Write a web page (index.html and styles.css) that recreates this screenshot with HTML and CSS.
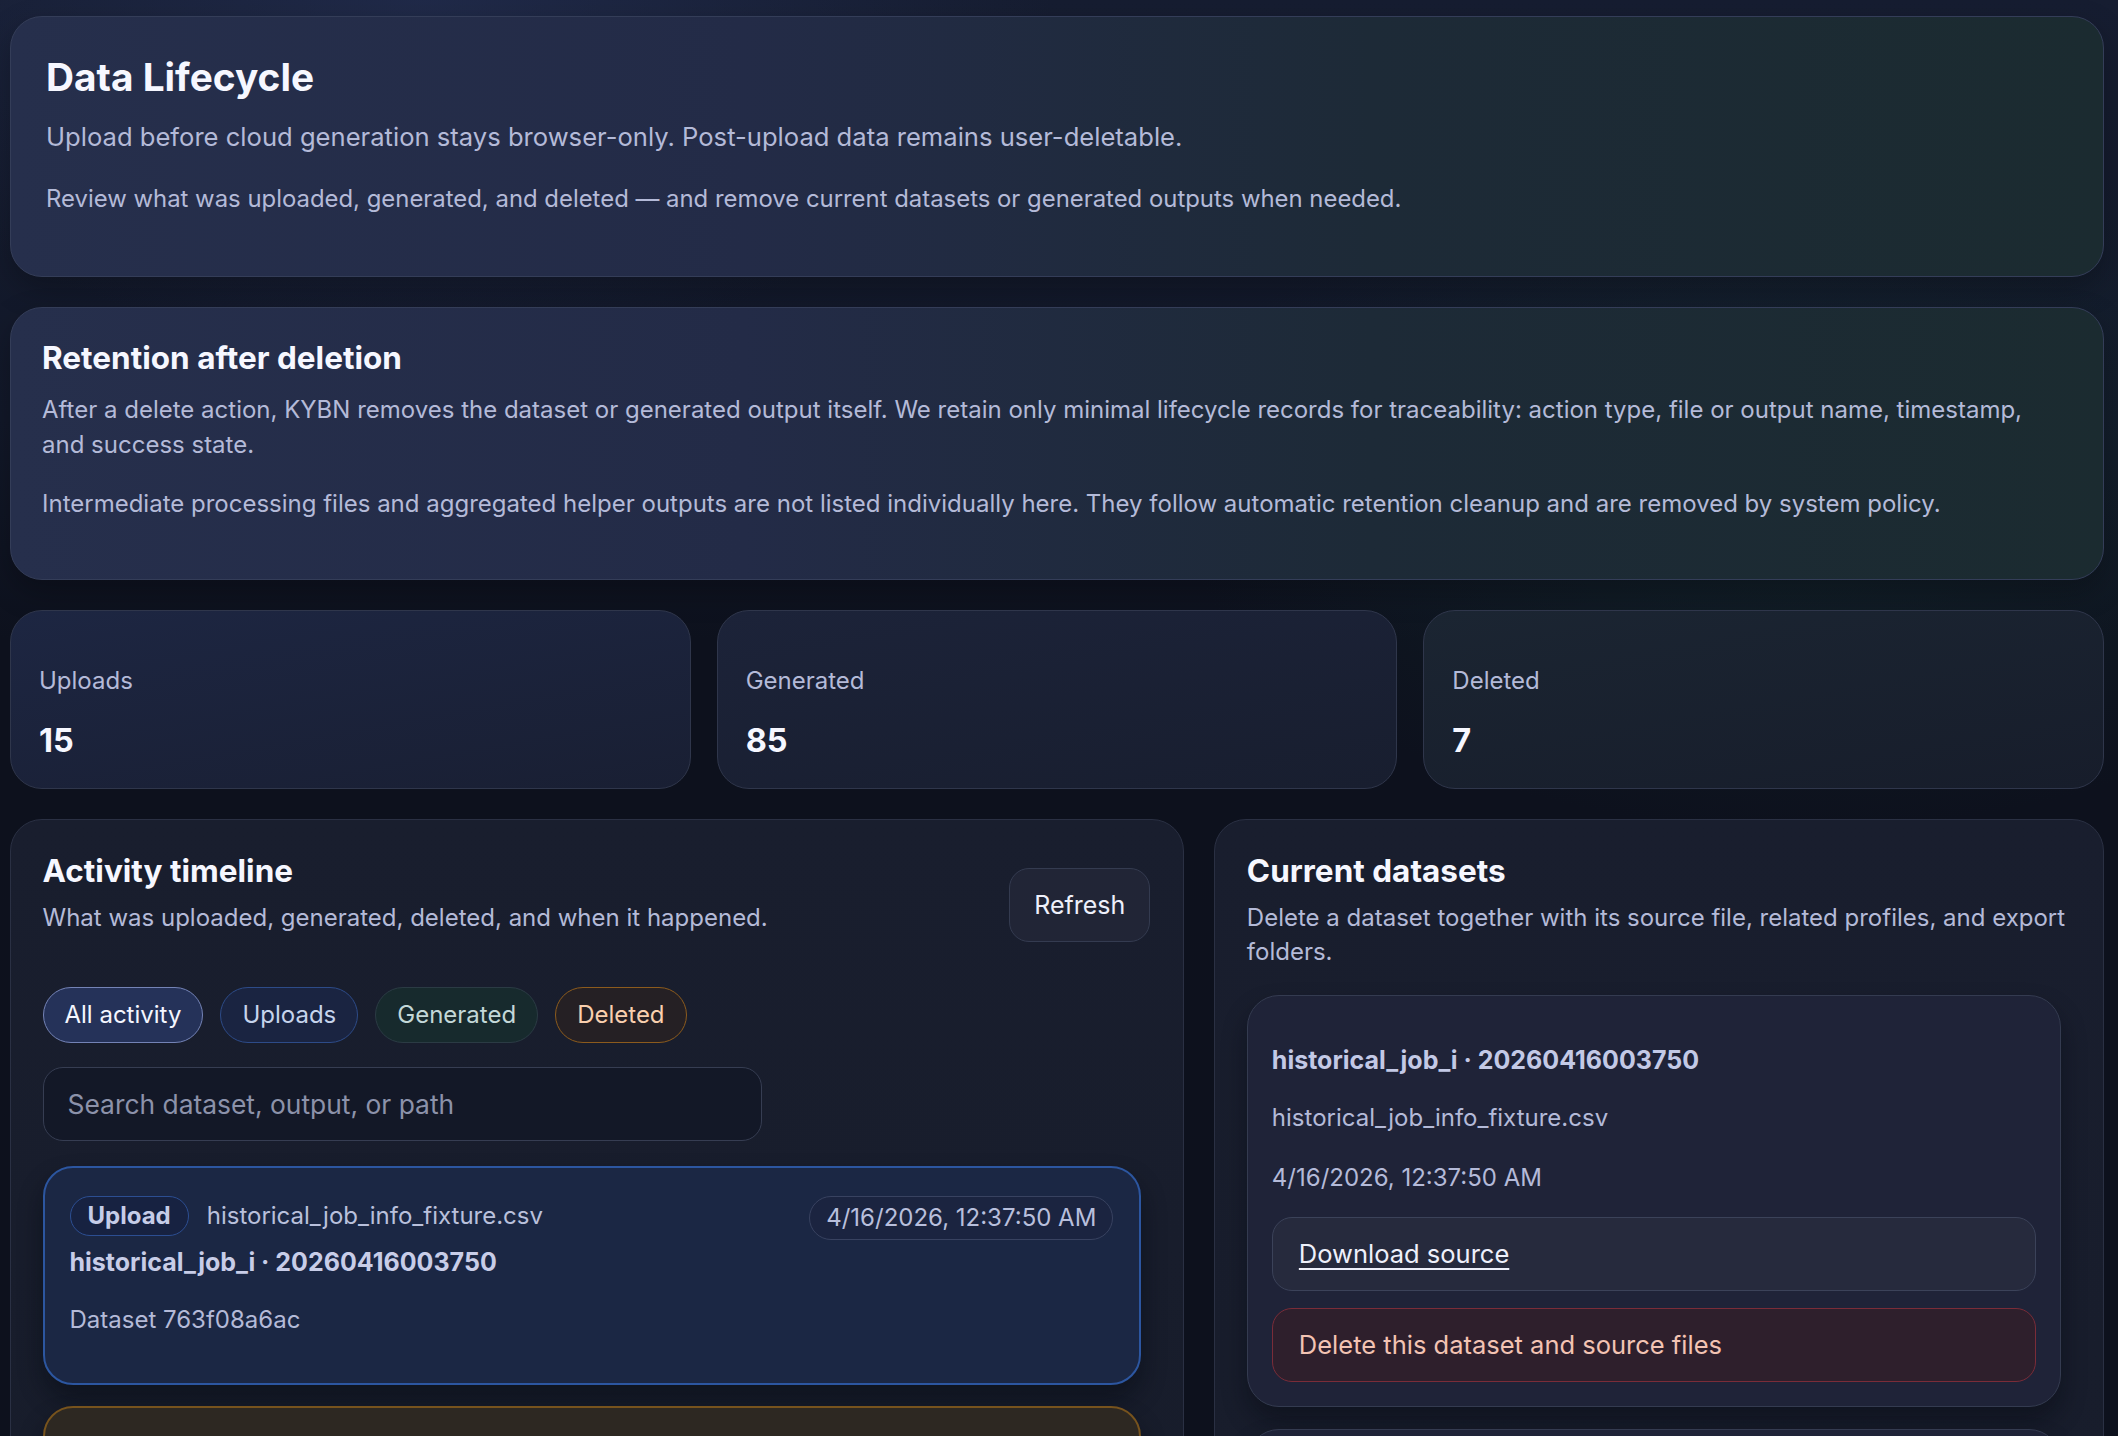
FILE: index.html
```html
<!DOCTYPE html>
<html lang="en">
<head>
    <meta charset="UTF-8">
    <meta name="viewport" content="width=device-width, initial-scale=1.0">
    <title>Data Lifecycle - KYBN</title>
    <link rel="stylesheet" href="styles.css">
</head>
<body>

    <main class="page">
        <section class="card hero">
            <h1>Data Lifecycle</h1>
            <p class="lead">Upload before cloud generation stays browser-only. Post-upload data remains user-deletable.</p>
            <p class="lead lead-small">Review what was uploaded, generated, and deleted — and remove current datasets or generated outputs when needed.</p>
        </section>

        <section class="card retention">
            <h2>Retention after deletion</h2>
            <p class="copy">After a delete action, KYBN removes the dataset or generated output itself. We retain only minimal lifecycle records for traceability: action type, file or output name, timestamp, and success state.</p>
            <p class="copy copy-gap">Intermediate processing files and aggregated helper outputs are not listed individually here. They follow automatic retention cleanup and are removed by system policy.</p>
        </section>

        <section class="stats">
            <div class="stat stat-blue">
                <div class="stat-label">Uploads</div>
                <div class="stat-value">15</div>
            </div>
            <div class="stat stat-mid">
                <div class="stat-label">Generated</div>
                <div class="stat-value">85</div>
            </div>
            <div class="stat stat-teal">
                <div class="stat-label">Deleted</div>
                <div class="stat-value">7</div>
            </div>
        </section>

        <section class="columns">
            <div class="panel">
                <div class="panel-head">
                    <div>
                        <h2>Activity timeline</h2>
                        <p class="copy subtitle">What was uploaded, generated, deleted, and when it happened.</p>
                    </div>
                    <button class="btn refresh-btn">Refresh</button>
                </div>

                <div class="filters">
                    <button class="chip chip-all">All activity</button>
                    <button class="chip chip-upload">Uploads</button>
                    <button class="chip chip-generated">Generated</button>
                    <button class="chip chip-deleted">Deleted</button>
                </div>

                <input class="search" type="text" placeholder="Search dataset, output, or path">

                <div class="timeline">
                    <article class="event event-upload">
                        <div class="event-head">
                            <span class="badge badge-upload">Upload</span>
                            <span class="event-file">historical_job_info_fixture.csv</span>
                            <span class="stamp">4/16/2026, 12:37:50 AM</span>
                        </div>
                        <div class="event-title">historical_job_i · 20260416003750</div>
                        <div class="event-meta">Dataset 763f08a6ac</div>
                    </article>
                    <article class="event event-deleted">
                        <div class="event-head">
                            <span class="badge badge-deleted">Delete</span>
                            <span class="event-file">historical_job_info_fixture.csv</span>
                            <span class="stamp">4/16/2026, 12:30:12 AM</span>
                        </div>
                        <div class="event-title">historical_job_i · 20260416002904</div>
                        <div class="event-meta">Dataset 5b1c2e90d4</div>
                    </article>
                </div>
            </div>

            <div class="panel">
                <h2>Current datasets</h2>
                <p class="copy subtitle">Delete a dataset together with its source file, related profiles, and export folders.</p>

                <div class="dataset-list">
                    <article class="dataset">
                        <div class="dataset-title">historical_job_i · 20260416003750</div>
                        <div class="dataset-line">historical_job_info_fixture.csv</div>
                        <div class="dataset-line dataset-date">4/16/2026, 12:37:50 AM</div>
                        <a class="action action-download" href="#">Download source</a>
                        <button class="action action-delete">Delete this dataset and source files</button>
                    </article>
                    <article class="dataset">
                        <div class="dataset-title">historical_job_i · 20260416002904</div>
                        <div class="dataset-line">historical_job_info_fixture.csv</div>
                        <div class="dataset-line dataset-date">4/16/2026, 12:29:04 AM</div>
                        <a class="action action-download" href="#">Download source</a>
                        <button class="action action-delete">Delete this dataset and source files</button>
                    </article>
                </div>
            </div>
        </section>
    </main>

</body>
</html>
```

FILE: styles.css
```css
* {
    box-sizing: border-box;
}

body {
    margin: 0;
    font-family: Inter, "Noto Sans", sans-serif;
    color: #eef0fb;
    background-color: #0d111d;
    background-image:
        radial-gradient(900px 500px at 20% 0%, rgba(40, 52, 92, 0.55), transparent 70%),
        radial-gradient(900px 500px at 85% 25%, rgba(22, 50, 52, 0.45), transparent 70%),
        linear-gradient(180deg, #161d31 0px, #121829 420px, #0d111d 640px);
    background-repeat: no-repeat;
}

.page {
    display: flex;
    flex-direction: column;
    gap: 30px;
    padding: 16px 14px 40px 10px;
}

h1, h2, p {
    margin: 0;
}

h1 {
    font-size: 38.8px;
    line-height: 46px;
    font-weight: 700;
    color: #f6f7ff;
}

h2 {
    font-size: 31.5px;
    line-height: 38px;
    font-weight: 700;
    color: #f6f7ff;
}

.copy {
    font-size: 24px;
    line-height: 34.7px;
    color: #b4bad8;
}

/* Top cards */
.card {
    border: 1.5px solid #343d58;
    border-radius: 32px;
    background: linear-gradient(90deg, #262f4c 0%, #232b47 35%, #1d2a37 65%, #1b2b30 100%);
    box-shadow: 0 12px 30px rgba(0, 0, 0, 0.25);
}

.hero {
    padding: 37.4px 35px 59px;
}

.lead {
    margin-top: 18.4px;
    font-size: 25.6px;
    line-height: 36px;
    color: #b4bad8;
}

.lead-small {
    margin-top: 26.6px;
    font-size: 23.9px;
}

.retention {
    padding: 30.5px 60px 57px 31px;
}

.retention h2 {
    margin-bottom: 16px;
}

.copy-gap {
    margin-top: 24.6px;
}

/* Stats */
.stats {
    display: grid;
    grid-template-columns: repeat(3, 1fr);
    gap: 26px;
}

.stat {
    border: 1.5px solid #2f364b;
    border-radius: 32px;
    padding: 53.2px 28px 27.3px;
}

.stat-blue {
    background: linear-gradient(170deg, #1d2642 0%, #191f33 100%);
}

.stat-mid {
    background: linear-gradient(170deg, #1c2339 0%, #181e2f 100%);
}

.stat-teal {
    background: linear-gradient(170deg, #1b2532 0%, #171d2b 100%);
}

.stat-label {
    font-size: 24px;
    line-height: 33px;
    color: #b4bad8;
}

.stat-value {
    margin-top: 25.5px;
    font-size: 32.5px;
    line-height: 38px;
    font-weight: 700;
    color: #f6f7ff;
}

/* Lower panels */
.columns {
    display: grid;
    grid-template-columns: minmax(0, 1.32fr) minmax(0, 1fr);
    gap: 30px;
    align-items: start;
}

.panel {
    border: 1.5px solid #2a3043;
    border-radius: 32px;
    background: linear-gradient(180deg, #191e2e 0%, #171c2a 100%);
    padding: 32px 33px 40px 31.5px;
}

.panel-head {
    display: flex;
    justify-content: space-between;
    align-items: flex-start;
    gap: 20px;
}

.subtitle {
    margin-top: 11px;
}

.btn {
    font-family: inherit;
    cursor: pointer;
}

.refresh-btn {
    margin-top: 16px;
    height: 74px;
    padding: 0 24px;
    border: 1.5px solid #343b50;
    border-radius: 20px;
    background-color: #212536;
    color: #eef0fb;
    font-size: 25px;
}

.filters {
    display: flex;
    gap: 17px;
    margin-top: 45px;
}

.chip {
    height: 56px;
    padding: 0 21px;
    border: 1.5px solid;
    border-radius: 999px;
    font-family: inherit;
    font-size: 24px;
    cursor: pointer;
}

.chip-all {
    background-color: #253259;
    border-color: #7483b6;
    color: #f4f6ff;
}

.chip-upload {
    background-color: #1a2441;
    border-color: #2d4b88;
    color: #c6d4ec;
}

.chip-generated {
    background-color: #172a2d;
    border-color: #2b3b44;
    color: #c3d8d8;
}

.chip-deleted {
    background-color: #252024;
    border-color: #8c5b1d;
    color: #f9cfae;
}

.search {
    display: block;
    width: 719px;
    height: 74px;
    margin-top: 24.5px;
    padding: 0 24px;
    border: 1.5px solid #363d52;
    border-radius: 20px;
    background-color: #131827;
    color: #eef0fb;
    font-family: inherit;
    font-size: 26.4px;
}

.search::placeholder {
    color: #8c92aa;
}

.timeline {
    display: flex;
    flex-direction: column;
    gap: 21px;
    margin-top: 25px;
    margin-right: 9px;
}

.event {
    border: 2px solid;
    border-radius: 30px;
    padding: 28px 26px 47.7px 25px;
    box-shadow: 0 14px 24px rgba(5, 8, 16, 0.45);
}

.event-upload {
    background-color: #1b2744;
    border-color: #2c56a0;
}

.event-deleted {
    background-color: #2d2822;
    border-color: #77531d;
}

.event-head {
    display: flex;
    align-items: flex-start;
    gap: 18px;
}

.badge {
    height: 40px;
    line-height: 37px;
    padding: 0 17px;
    border: 1.5px solid;
    border-radius: 999px;
    font-size: 24px;
    font-weight: 700;
}

.badge-upload {
    background-color: #172241;
    border-color: #2c4e92;
    color: #c6cde8;
}

.badge-deleted {
    background-color: #2a231c;
    border-color: #8c5b1d;
    color: #f4caa6;
}

.event-file {
    font-size: 24px;
    line-height: 40px;
    color: #b9c0dc;
}

.stamp {
    margin-left: auto;
    height: 44px;
    line-height: 41px;
    padding: 0 16px;
    border: 1.5px solid #384260;
    border-radius: 999px;
    background-color: #1b2440;
    font-size: 24px;
    color: #b8bfdc;
}

.event-title {
    margin-top: 6px;
    font-size: 25px;
    line-height: 33.6px;
    font-weight: 700;
    color: #c8cde8;
}

.event-meta {
    margin-top: 23px;
    font-size: 24px;
    line-height: 33px;
    color: #b4bad8;
}

/* Datasets */
.dataset-list {
    display: flex;
    flex-direction: column;
    gap: 22px;
    margin-top: 24.7px;
    margin-right: 9px;
}

.dataset {
    display: flex;
    flex-direction: column;
    border: 1.5px solid #343b50;
    border-radius: 32px;
    background-color: #1f2338;
    padding: 48px 24px 24px;
    box-shadow: 0 14px 24px rgba(5, 8, 16, 0.4);
}

.dataset-title {
    font-size: 25px;
    line-height: 33.6px;
    font-weight: 700;
    color: #c3c9e6;
}

.dataset-line {
    margin-top: 22.4px;
    font-size: 24px;
    line-height: 36px;
    color: #b4bad8;
}

.dataset-date {
    margin-top: 24.5px;
}

.action {
    display: flex;
    align-items: center;
    height: 74px;
    padding: 0 26px;
    border: 1.5px solid;
    border-radius: 20px;
    font-family: inherit;
    font-size: 25.5px;
    text-align: left;
    cursor: pointer;
}

.action-download {
    margin-top: 20.5px;
    background-color: #262a3d;
    border-color: #3b4259;
    color: #eef0fb;
    text-decoration: underline;
    text-underline-offset: 5px;
}

.action-delete {
    margin-top: 17px;
    background-color: #2e1f2c;
    border-color: #7a2c38;
    color: #f3c3b3;
}
```
